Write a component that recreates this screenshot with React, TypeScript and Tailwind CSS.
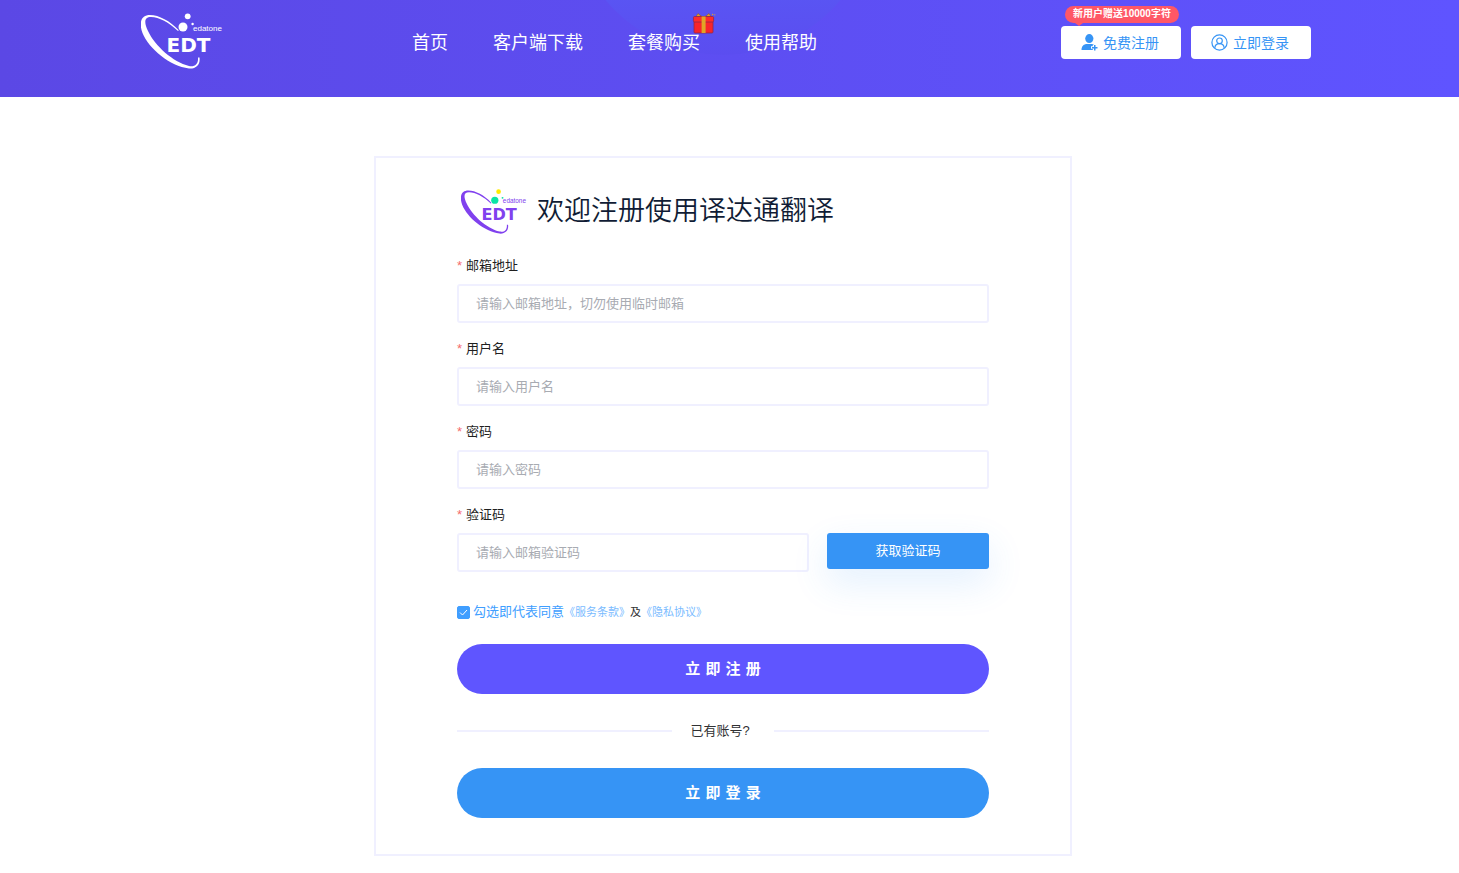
import { useState } from "react";

type LogoProps = {
  className: string;
  main: string;
  top: string;
  middle: string;
};

const navItems = [
  { label: "首页", href: "#home" },
  { label: "客户端下载", href: "#download" },
  { label: "套餐购买", href: "#pricing", gift: true },
  { label: "使用帮助", href: "#help" },
];

const fields = [
  { id: "email", label: "邮箱地址", type: "email", placeholder: "请输入邮箱地址，切勿使用临时邮箱" },
  { id: "username", label: "用户名", type: "text", placeholder: "请输入用户名" },
  { id: "password", label: "密码", type: "password", placeholder: "请输入密码" },
];

const inputClass =
  "h-[39px] w-full min-w-0 rounded-[3px] border-2 border-[#f0f0ff] bg-white px-[17px] text-[13px] text-gray-800 outline-none placeholder:text-[#a8abb2] focus:border-[#5f55ff]";

function Logo({ className, main, top, middle }: LogoProps) {
  return (
    <svg viewBox="0 0 82 56" className={className} role="img" aria-label="EDT edatone">
      <path
        d="M37 18C28 9.500 18 4 10 4C3 4 3 9.500 7 18C14 33 32 49 48 53C54 54 57.500 51 57 44.500L58.500 44.500C59.500 51 55.500 56 48 55.500C29 53 8 36 1.500 20C-2.500 9 0.500 2 9 2C18 2 29 8 37.800 17.300Z"
        fill={main}
      />
      <circle cx="46.700" cy="3.300" r="2.900" fill={top} />
      <circle cx="42" cy="14" r="4.500" fill={middle} />
      <circle cx="51.600" cy="11" r="1.200" fill={middle} />
      <text x="52" y="17.500" fontSize="8" fill={main} fontFamily="Liberation Sans, sans-serif">
        edatone
      </text>
      <text x="25.500" y="39" fontSize="20" fontWeight="700" fill={main} fontFamily="DejaVu Sans, sans-serif">
        EDT
      </text>
    </svg>
  );
}

function GiftIcon() {
  return (
    <svg viewBox="0 0 24 21" className="absolute -top-4 -right-4 h-[21px] w-6" aria-hidden="true">
      <path d="M4 3.500L6 0.500L9 3L11.500 4L14 3L17 0.500L19 3.500Z" fill="#e0a526" stroke="#8a4b3a" strokeWidth="0.600" />
      <rect x="2" y="8" width="19" height="12" rx="1" fill="#f8242b" stroke="#8e2a4d" strokeWidth="0.800" />
      <rect x="1.400" y="3.500" width="20.200" height="5.500" rx="1.200" fill="#ff2b2b" stroke="#8e2a4d" strokeWidth="0.800" />
      <rect x="9.600" y="3.500" width="4" height="16.500" fill="#e0a526" />
      <circle cx="20.600" cy="1.500" r="0.700" fill="#e0a526" />
      <circle cx="22.800" cy="1.800" r="0.600" fill="#e0a526" />
    </svg>
  );
}

function UserPlusIcon() {
  return (
    <svg viewBox="0 0 17 17" className="size-[17px]" fill="#3694f5" aria-hidden="true">
      <ellipse cx="8.300" cy="4.600" rx="4.100" ry="4.500" />
      <path d="M0.500 16C0.500 12 3 10 6 10H10.500C11.500 10 12.300 10.300 12.800 10.700V11H11.800V12.300H10V14.800H11.800V16Z" />
      <path d="M13 11H14.500V13H16.500V14.500H14.500V16.500H13V14.500H11V13H13Z" />
    </svg>
  );
}

function UserCircleIcon() {
  return (
    <svg viewBox="0 0 17 17" className="size-[17px]" fill="none" stroke="#3694f5" strokeWidth="1.200" aria-hidden="true">
      <circle cx="8.500" cy="8.500" r="7.600" />
      <circle cx="8.500" cy="6.800" r="2.800" />
      <path d="M3.800 14C4 11.200 5.800 9.600 8.500 9.600S13 11.200 13.200 14" />
    </svg>
  );
}

function Header() {
  return (
    <header className="relative h-[97px] overflow-hidden bg-linear-to-r from-[#5b48e5] to-[#5f54ff] pr-[7px]">
      <div className="absolute -top-[251px] left-1/2 size-[306px] -translate-x-[160px] rounded-full bg-linear-to-t from-[#5b4df0] via-[#5955f3] via-20% to-[#5859f5]" />
      <div className="relative mx-auto flex h-[85px] max-w-[1170px] items-center">
        <a href="#home" className="shrink-0 pb-1">
          <Logo className="h-14 w-[82px]" main="#ffffff" top="#ffffff" middle="#ffffff" />
        </a>
        <nav className="ml-[189px] flex gap-[45px] text-lg whitespace-nowrap text-white">
          {navItems.map((item) => (
            <a key={item.label} href={item.href} className="relative">
              {item.label}
              {item.gift && <GiftIcon />}
            </a>
          ))}
        </nav>
        <div className="ml-auto flex gap-2.5 text-sm text-[#3694f5]">
          <div className="relative">
            <button className="flex h-[33px] w-[120px] items-center justify-center gap-[5px] rounded bg-white pr-0.5">
              <UserPlusIcon />
              免费注册
            </button>
            <span className="absolute -top-5 left-1 flex h-[17px] w-[114px] items-center justify-center rounded-full bg-[#ff5766] text-[10px] font-bold whitespace-nowrap text-white">
              新用户赠送10000字符
              <span className="absolute top-full left-2.5 border-x-4 border-t-[3px] border-x-transparent border-t-[#ff5766]" />
            </span>
          </div>
          <button className="flex h-[33px] w-[120px] items-center justify-center gap-[5px] rounded bg-white pr-0.5">
            <UserCircleIcon />
            立即登录
          </button>
        </div>
      </div>
    </header>
  );
}

function FieldLabel({ id, text }: { id: string; text: string }) {
  return (
    <label htmlFor={id} className="flex gap-1 text-[13px] leading-5 text-[#1f1f1f]">
      <span className="text-[#f56c6c]">*</span>
      {text}
    </label>
  );
}

function RegisterForm() {
  const [agreed, setAgreed] = useState(true);

  return (
    <form
      onSubmit={(e) => e.preventDefault()}
      className="mx-auto w-full max-w-[698px] border-2 border-[#f0f0ff] px-[81px] pt-[25px] pb-9"
    >
      <div className="flex h-14 items-center gap-2.5 pl-1">
        <Logo className="h-[45px] w-[66px]" main="#8041ee" top="#ffeb00" middle="#0be5a5" />
        <h1 className="text-[27px] leading-none font-[350] whitespace-nowrap text-[#101c35]">欢迎注册使用译达通翻译</h1>
      </div>

      <div className="mt-[17px] flex flex-col gap-4">
        {fields.map((field) => (
          <div key={field.id} className="flex flex-col gap-2">
            <FieldLabel id={field.id} text={field.label} />
            <input id={field.id} type={field.type} placeholder={field.placeholder} className={inputClass} />
          </div>
        ))}
        <div className="flex flex-col gap-2">
          <FieldLabel id="code" text="验证码" />
          <div className="flex items-start gap-[18px]">
            <input id="code" type="text" placeholder="请输入邮箱验证码" className={inputClass} />
            <button
              type="button"
              className="h-9 w-[162px] shrink-0 rounded-[3px] bg-[#3694f5] text-[13px] text-white shadow-[0_14px_36px_rgba(54,148,245,0.14)]"
            >
              获取验证码
            </button>
          </div>
        </div>
      </div>

      <div className="mt-[30px] flex h-5 items-center text-[11px] whitespace-nowrap text-[#79bbff]">
        <span className="relative mr-[3px] size-[13px]">
          <input
            id="agree"
            type="checkbox"
            checked={agreed}
            onChange={(e) => setAgreed(e.target.checked)}
            className="block size-[13px] appearance-none rounded-[2px] border border-[#409eff] bg-white checked:bg-[#409eff]"
          />
          {agreed && (
            <svg viewBox="0 0 13 13" className="pointer-events-none absolute inset-0" fill="none" stroke="#ffffff" aria-hidden="true">
              <path d="M3 6.500L5.500 9L10 4" />
            </svg>
          )}
        </span>
        <label htmlFor="agree" className="text-[13px] text-[#409eff]">
          勾选即代表同意
        </label>
        <a href="#terms">《服务条款》</a>
        <span className="text-[#303133]">及</span>
        <a href="#privacy">《隐私协议》</a>
      </div>

      <button type="submit" className="mt-[22px] h-[50px] w-full rounded-full bg-[#5f55ff] font-[DejaVu_Sans,Noto_Sans_CJK_SC,sans-serif] text-[15px] font-bold text-white">
        立 即 注 册
      </button>

      <div className="mt-7 flex h-[18px] items-center text-[13px] text-[#303133]">
        <span className="h-0.5 flex-1 bg-[#f0f0ff]" />
        <span className="pr-6 pl-[18px]">已有账号?</span>
        <span className="h-0.5 flex-1 bg-[#f0f0ff]" />
      </div>

      <button type="button" className="mt-7 h-[50px] w-full rounded-full bg-[#3694f5] font-[DejaVu_Sans,Noto_Sans_CJK_SC,sans-serif] text-[15px] font-bold text-white">
        立 即 登 录
      </button>
    </form>
  );
}

export default function App() {
  return (
    <div className="min-h-screen bg-white font-['Liberation_Sans','Noto_Sans_CJK_SC',sans-serif]">
      <Header />
      <main className="pt-[59px] pr-[13px] pb-4">
        <RegisterForm />
      </main>
    </div>
  );
}
